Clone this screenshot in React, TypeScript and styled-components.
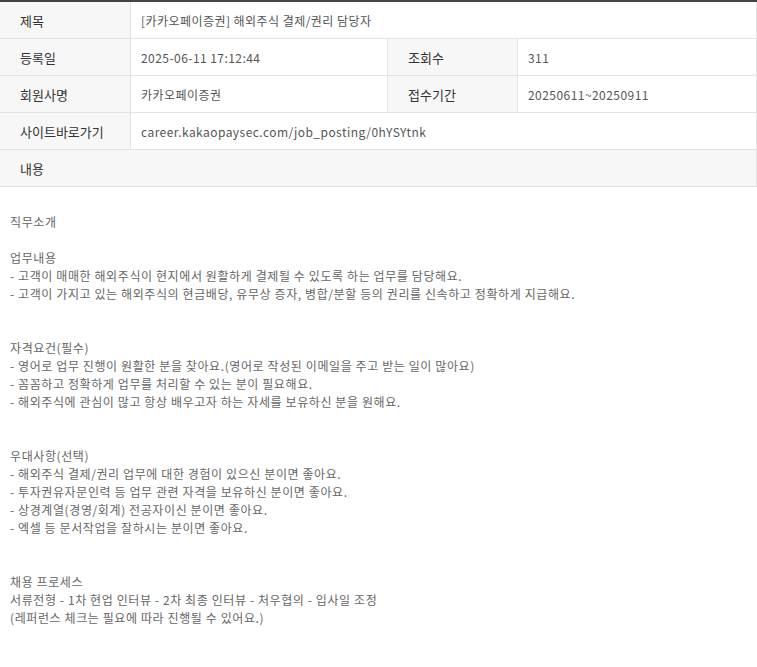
import React from "react";
import styled, { createGlobalStyle } from "styled-components";

const Global = createGlobalStyle`
  body { margin: 0; background: #fff; font-family: "Noto Sans CJK KR", "Noto Sans", sans-serif; }
`;

const Table = styled.div`
  width: 757px;
  border-top: 2px solid #444;
  display: grid;
  grid-template-columns: 131px 257px 130px 1fr;
`;

const Label = styled.div<{ $span?: number }>`
  grid-column: span ${p => p.$span || 1};
  height: 37px;
  box-sizing: border-box;
  background: #f7f7f7;
  border-bottom: 1px solid #e3e3e3;
  border-right: 1px solid #e3e3e3;
  display: flex;
  align-items: center;
  padding-left: 20px;
  font-size: 13px;
  color: #333;
`;

const Value = styled.div<{ $span?: number }>`
  grid-column: span ${p => p.$span || 1};
  height: 37px;
  box-sizing: border-box;
  border-bottom: 1px solid #e3e3e3;
  border-right: 1px solid #e3e3e3;
  display: flex;
  align-items: center;
  padding-left: 10px;
  font-size: 12px;
  letter-spacing: 0.45px;
  color: #555;
  &:last-child { border-right: none; }
`;

const Content = styled.div`
  padding: 26px 10px 40px;
  border-bottom: 1px solid #e3e3e3;
  font-size: 12px;
  line-height: 18px;
  letter-spacing: 0.6px;
  color: #666;
  white-space: pre-wrap;
`;

const text = `직무소개

업무내용
- 고객이 매매한 해외주식이 현지에서 원활하게 결제될 수 있도록 하는 업무를 담당해요.
- 고객이 가지고 있는 해외주식의 현금배당, 유무상 증자, 병합/분할 등의 권리를 신속하고 정확하게 지급해요.


자격요건(필수)
- 영어로 업무 진행이 원활한 분을 찾아요.(영어로 작성된 이메일을 주고 받는 일이 많아요)
- 꼼꼼하고 정확하게 업무를 처리할 수 있는 분이 필요해요.
- 해외주식에 관심이 많고 항상 배우고자 하는 자세를 보유하신 분을 원해요.


우대사항(선택)
- 해외주식 결제/권리 업무에 대한 경험이 있으신 분이면 좋아요.
- 투자권유자문인력 등 업무 관련 자격을 보유하신 분이면 좋아요.
- 상경계열(경영/회계) 전공자이신 분이면 좋아요.
- 엑셀 등 문서작업을 잘하시는 분이면 좋아요.


채용 프로세스
서류전형 - 1차 현업 인터뷰 - 2차 최종 인터뷰 - 처우협의 - 입사일 조정
(레퍼런스 체크는 필요에 따라 진행될 수 있어요.)`;

export default function App() {
  return (
    <>
      <Global />
      <Table>
        <Label>제목</Label>
        <Value $span={3}>[카카오페이증권] 해외주식 결제/권리 담당자</Value>
        <Label>등록일</Label>
        <Value>2025-06-11 17:12:44</Value>
        <Label>조회수</Label>
        <Value>311</Value>
        <Label>회원사명</Label>
        <Value>카카오페이증권</Value>
        <Label>접수기간</Label>
        <Value>20250611~20250911</Value>
        <Label>사이트바로가기</Label>
        <Value $span={3}>career.kakaopaysec.com/job_posting/0hYSYtnk</Value>
        <Label $span={4}>내용</Label>
      </Table>
      <Content>{text}</Content>
    </>
  );
}
